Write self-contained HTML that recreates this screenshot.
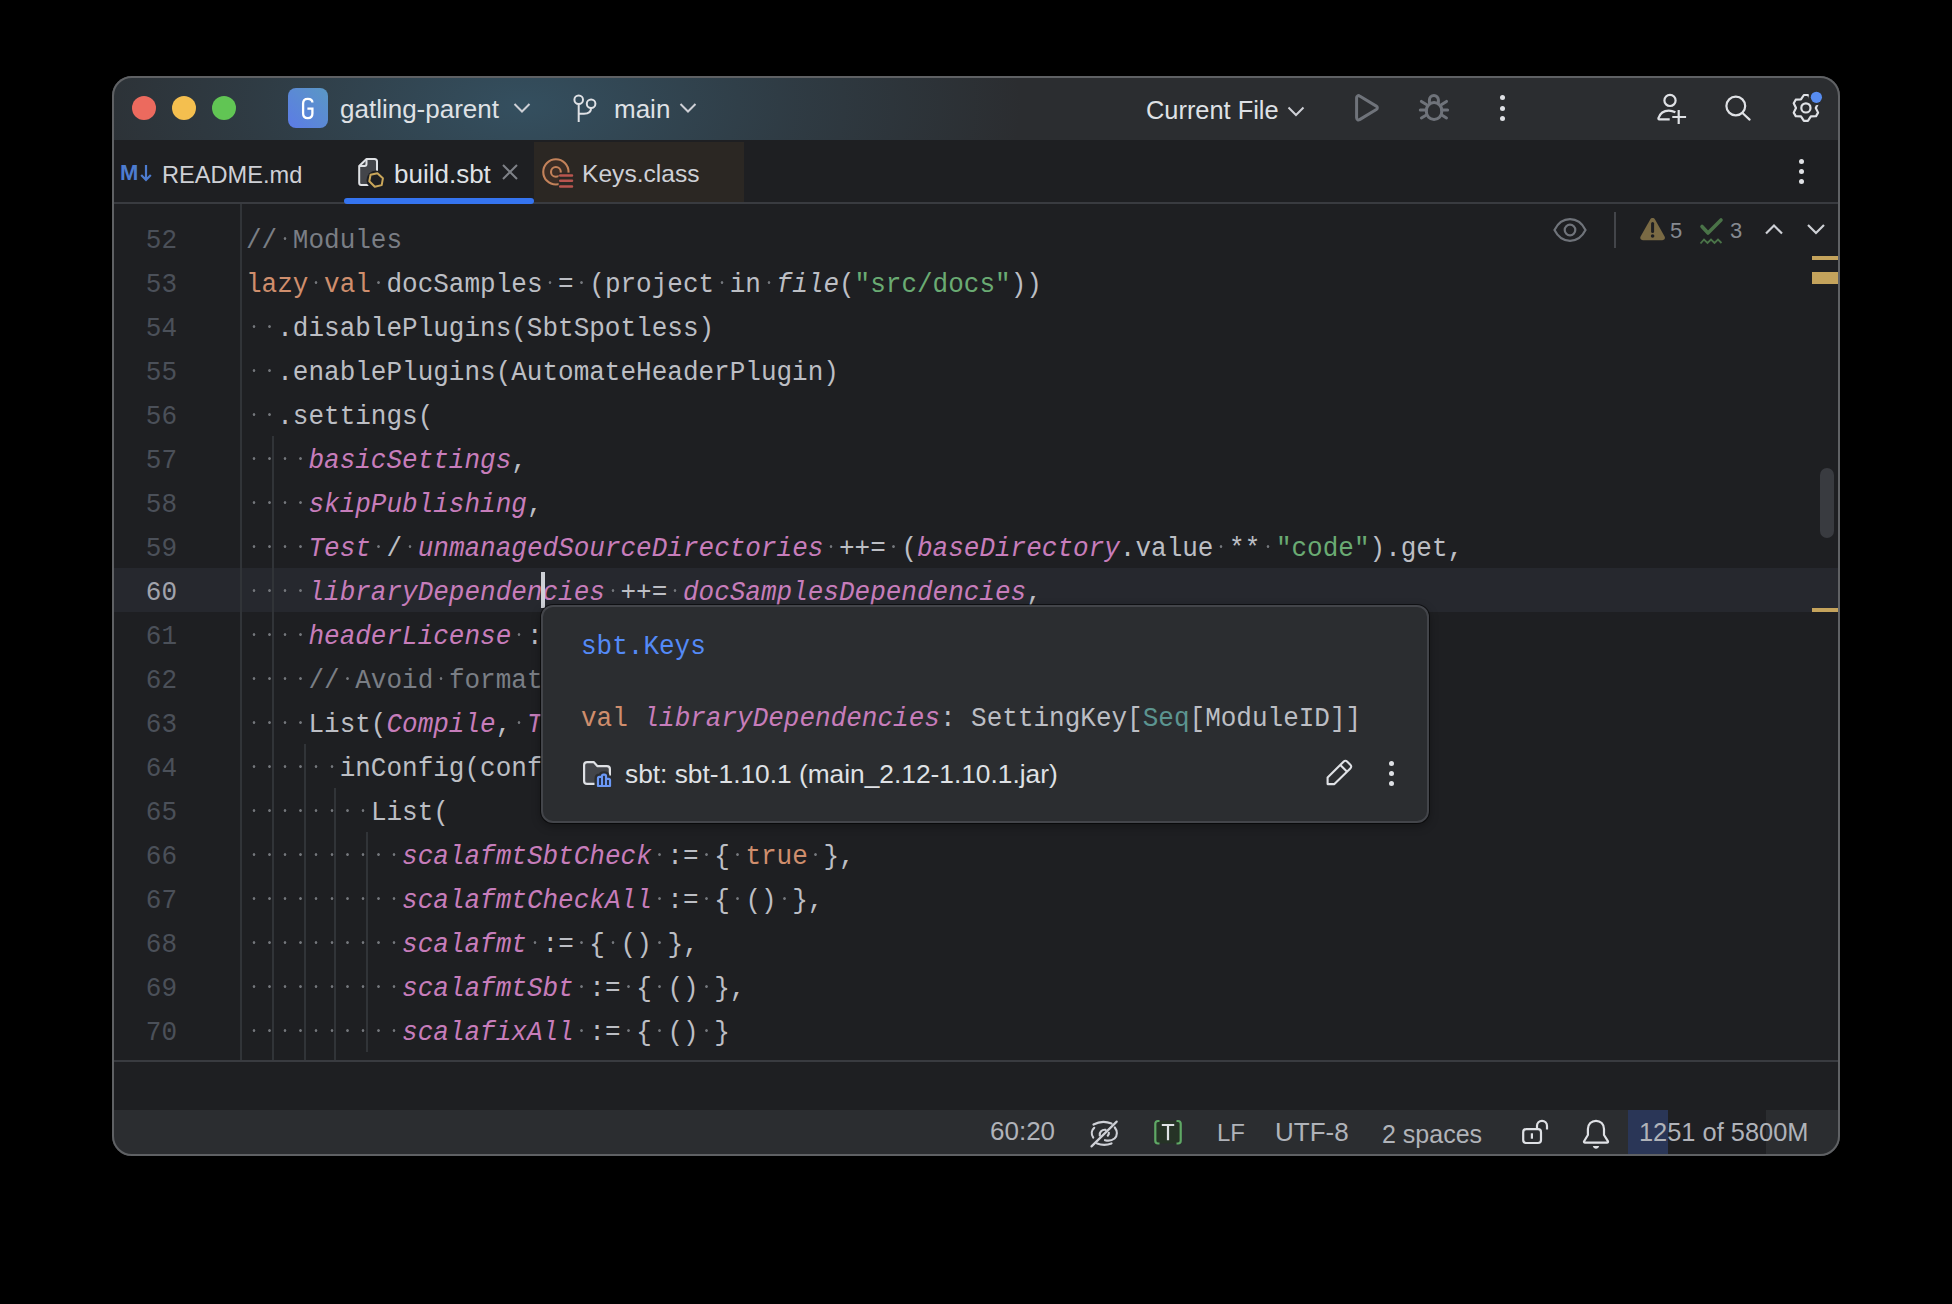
<!DOCTYPE html>
<html><head><meta charset="utf-8"><style>
*{box-sizing:border-box;margin:0;padding:0}
html,body{width:1952px;height:1304px;overflow:hidden;background:#000}
body{position:relative;font-family:"Liberation Sans",sans-serif}
#win{position:absolute;left:0;top:0;width:1952px;height:1304px;clip-path:inset(76px 112px 148px 112px round 20px);background:#1E1F22}
#win>div,#win>span,#win>svg{position:absolute}
#frame{position:absolute;left:112px;top:76px;width:1728px;height:1080px;border-radius:20px;border:2px solid #5f6164;pointer-events:none;z-index:50}
.ui{font-family:"Liberation Sans",sans-serif;font-size:26px;color:#DFE1E5;white-space:pre;line-height:30px}
.code{font-family:"Liberation Mono",monospace;font-size:26px;white-space:pre;line-height:44px;height:44px;color:#BCBEC4;left:246px;padding-top:3px;transform:scaleY(1.06);transform-origin:0 34px}
.k{color:#CF8E6D}.s{color:#6AAB73}.c{color:#7A7E85}.p{color:#C77DBB;font-style:italic}.i{font-style:italic}
.w{background:radial-gradient(circle at 50% 44%, #74777C 0, #74777C 0.9px, rgba(116,119,124,0) 1.7px)}
.ln{font-family:"Liberation Mono",monospace;font-size:26px;line-height:44px;padding-top:3px;transform:scaleY(1.05);transform-origin:0 34px;color:#4B5059;text-align:right;width:100px;left:77px}
.guide{width:2px;background:#313438}
</style></head>
<body>
<div id="win">

<div style="left:112px;top:76px;width:1728px;height:64px;background:radial-gradient(ellipse 500px 240px at 410px 30px, rgba(58,100,124,0.62), rgba(58,100,124,0.25) 55%, rgba(58,100,124,0) 100%), #2B2D30"></div>
<div style="left:132px;top:96px;width:24px;height:24px;border-radius:50%;background:#EC6A5E"></div>
<div style="left:172px;top:96px;width:24px;height:24px;border-radius:50%;background:#F4BF4F"></div>
<div style="left:212px;top:96px;width:24px;height:24px;border-radius:50%;background:#61C554"></div>
<div style="left:288px;top:88px;width:40px;height:40px;border-radius:8px;background:linear-gradient(45deg,#5C7BE6 0%,#5A98C4 100%)"></div>
<svg style="left:288px;top:88px" width="40" height="40" viewBox="0 0 40 40"><path d="M24.4 14.6 C24.4 12.2 22.6 10.9 19.8 10.9 C16.9 10.9 15.1 12.5 15.1 15.5 V25.6 C15.1 28.6 16.9 30.2 19.8 30.2 C22.7 30.2 24.4 28.6 24.4 25.6 V20.6 H19.4" fill="none" stroke="#fff" stroke-width="2.3"/></svg>
<div class="ui" style="left:340px;top:94px;">gatling-parent</div>
<svg style="left:512px;top:100px" width="20" height="16" viewBox="0 0 20 16"><path d="M2.5 4 L10 11.5 L17.5 4" fill="none" stroke="#CED0D6" stroke-width="2"/></svg>
<svg style="left:570px;top:92px" width="32" height="32" viewBox="0 0 32 32"><circle cx="8.7" cy="7.8" r="4.3" fill="none" stroke="#DFE1E5" stroke-width="2"/><circle cx="21.1" cy="11.7" r="4.3" fill="none" stroke="#DFE1E5" stroke-width="2"/><path d="M8.7 12.1 V30" fill="none" stroke="#DFE1E5" stroke-width="2"/><path d="M21.1 16 C21.1 20 19 21.8 14 21.8 H8.7" fill="none" stroke="#DFE1E5" stroke-width="2"/></svg>
<div class="ui" style="left:614px;top:94px;">main</div>
<svg style="left:678px;top:100px" width="20" height="16" viewBox="0 0 20 16"><path d="M2.5 4 L10 11.5 L17.5 4" fill="none" stroke="#CED0D6" stroke-width="2"/></svg>
<div class="ui" style="left:1146px;top:95px;font-size:25.4px">Current File</div>
<svg style="left:1286px;top:104px" width="20" height="16" viewBox="0 0 20 16"><path d="M2.5 3.5 L10 11 L17.5 3.5" fill="none" stroke="#CED0D6" stroke-width="2"/></svg>
<svg style="left:1350px;top:90px" width="36" height="36" viewBox="0 0 36 36"><path d="M6.6 7.8 C6.6 6.1 8.2 5.1 9.6 6 L26.3 16.1 C27.7 17 27.7 18.6 26.3 19.5 L9.6 29.6 C8.2 30.5 6.6 29.5 6.6 27.8 Z" fill="none" stroke="#6F737A" stroke-width="3" stroke-linejoin="round"/></svg>
<svg style="left:1416px;top:90px" width="36" height="36" viewBox="0 0 36 36"><g fill="none" stroke="#6F737A" stroke-width="3" stroke-linecap="round"><path d="M13.4 12.3 V10 A4.5 4.5 0 0 1 22.4 10 V12.3"/><rect x="10.4" y="12.6" width="15.3" height="16.9" rx="7.6"/><path d="M5.4 11.4 L10.4 14.5 M4.3 20 H10.4 M5.4 28 L10.4 25 M30.5 11.4 L25.7 14.5 M31.6 20 H25.7 M30.5 28 L25.7 25"/></g></svg>
<div style="left:1499.5px;top:95px;width:5px;height:5px;border-radius:50%;background:#DFE1E5"></div>
<div style="left:1499.5px;top:105.5px;width:5px;height:5px;border-radius:50%;background:#DFE1E5"></div>
<div style="left:1499.5px;top:116px;width:5px;height:5px;border-radius:50%;background:#DFE1E5"></div>
<svg style="left:1654px;top:90px" width="36" height="36" viewBox="0 0 36 36"><g fill="none" stroke="#DFE1E5" stroke-width="2.2"><circle cx="16" cy="10.4" r="5.6"/><path d="M15.7 29.3 H5.2 C4.5 29.3 4.2 28.8 4.5 28 C6 23.5 10 20.6 14.8 20.6 C17 20.6 19 21.1 21.4 22.3"/><path d="M18.3 27 H32.1 M24.7 20.1 V34"/></g></svg>
<svg style="left:1720px;top:90px" width="36" height="36" viewBox="0 0 36 36"><g fill="none" stroke="#DFE1E5" stroke-width="2.2"><circle cx="15.8" cy="16" r="9.4"/><path d="M22.5 23 L29.6 29.6" stroke-linecap="round"/></g></svg>
<svg style="left:1788px;top:90px" width="36" height="36" viewBox="0 0 36 36"><g fill="none" stroke="#DFE1E5" stroke-width="2.2" stroke-linejoin="round"><path d="M15.90 5.00 L19.90 5.00 L22.85 9.33 L28.07 9.72 L30.07 13.18 L27.80 17.90 L30.07 22.62 L28.07 26.08 L22.85 26.47 L19.90 30.80 L15.90 30.80 L12.95 26.47 L7.73 26.08 L5.73 22.62 L8.00 17.90 L5.73 13.18 L7.73 9.72 L12.95 9.33 Z"/><circle cx="17.9" cy="17.9" r="4.6"/></g><circle cx="28.4" cy="7.3" r="8" fill="#2B2D30"/><circle cx="28.4" cy="7.3" r="5.6" fill="#578CF0"/></svg>


<div style="left:112px;top:140px;width:1728px;height:64px;background:#1E1F22"></div>
<div style="left:534px;top:142px;width:210px;height:60px;background:#2B2723"></div>
<div style="left:112px;top:202px;width:1728px;height:2px;background:#393B40"></div>
<div style="left:344px;top:198px;width:190px;height:6px;border-radius:3px;background:#3574F0"></div>
<div class="ui" style="left:120px;top:158px;color:#4D7CD0;font-weight:bold;font-size:22px;">M</div>
<svg style="left:139px;top:162px" width="16" height="22" viewBox="0 0 16 22"><path d="M7 3 V18 M2.2 13 L7 18 L11.8 13" fill="none" stroke="#4D7CD0" stroke-width="2.2"/></svg>
<div class="ui" style="left:162px;top:160px;color:#CED0D6;font-size:23.6px;">README.md</div>
<svg style="left:354px;top:154px" width="36" height="36" viewBox="0 0 36 36"><path d="M5.2 12 L12.5 5 H20.5 Q23 5 23 7.5 V29 Q23 31 21 31 H7.2 Q5.2 31 5.2 29 Z" fill="#43454A" stroke="#DFE1E5" stroke-width="2" stroke-linejoin="round"/><path d="M12.5 5 V10 Q12.5 12 10.5 12 H5.2" fill="none" stroke="#DFE1E5" stroke-width="2" stroke-linejoin="round"/><circle cx="22.1" cy="26" r="9.6" fill="#1E1F22"/><path d="M23.4 19.2 L28.9 24.3 L27.7 31.1 L20.8 32.7 L15.3 27.2 L16.6 20.8 Z" fill="none" stroke="#C9A65A" stroke-width="2" stroke-linejoin="round"/></svg>
<div class="ui" style="left:394px;top:159px;color:#DFE1E5;">build.sbt</div>
<svg style="left:500px;top:162px" width="20" height="20" viewBox="0 0 20 20"><path d="M3 3 L17 17 M17 3 L3 17" stroke="#7E8187" stroke-width="2"/></svg>
<svg style="left:540px;top:154px" width="36" height="36" viewBox="0 0 36 36"><circle cx="15.9" cy="17.9" r="12.65" fill="#3B2D25" stroke="#C3825A" stroke-width="2.1"/><circle cx="15.9" cy="17.9" r="4.9" fill="none" stroke="#C3825A" stroke-width="2.1"/><rect x="18.6" y="18.6" width="16" height="17" fill="#2B2723"/><path d="M20.2 21.5 H32 M20.2 26.7 H32 M20.2 32.6 H32" stroke="#B9554F" stroke-width="2.5" stroke-linecap="round"/></svg>
<div class="ui" style="left:582px;top:159px;color:#CED0D6;font-size:24.6px;">Keys.class</div>
<div style="left:1799px;top:159px;width:5px;height:5px;border-radius:50%;background:#DFE1E5"></div>
<div style="left:1799px;top:169px;width:5px;height:5px;border-radius:50%;background:#DFE1E5"></div>
<div style="left:1799px;top:179px;width:5px;height:5px;border-radius:50%;background:#DFE1E5"></div>

<div style="left:112px;top:568px;width:1728px;height:44px;background:#26282E"></div>
<div style="left:240px;top:204px;width:2px;height:856px;background:#313438"></div>
<div class="guide" style="left:272px;top:436px;height:624px"></div>
<div class="guide" style="left:304px;top:744px;height:316px"></div>
<div class="guide" style="left:334px;top:788px;height:272px"></div>
<div class="guide" style="left:366px;top:832px;height:220px"></div>
<div class="ln" style="top:216px;">52</div>
<div class="code" style="top:216px"><span class="c">//</span><span class="w"> </span><span class="c">Modules</span></div>
<div class="ln" style="top:260px;">53</div>
<div class="code" style="top:260px"><span class="k">lazy</span><span class="w"> </span><span class="k">val</span><span class="w"> </span>docSamples<span class="w"> </span>=<span class="w"> </span>(project<span class="w"> </span>in<span class="w"> </span><span class="i">file</span>(<span class="s">&quot;src/docs&quot;</span>))</div>
<div class="ln" style="top:304px;">54</div>
<div class="code" style="top:304px"><span class="w"> </span><span class="w"> </span>.disablePlugins(SbtSpotless)</div>
<div class="ln" style="top:348px;">55</div>
<div class="code" style="top:348px"><span class="w"> </span><span class="w"> </span>.enablePlugins(AutomateHeaderPlugin)</div>
<div class="ln" style="top:392px;">56</div>
<div class="code" style="top:392px"><span class="w"> </span><span class="w"> </span>.settings(</div>
<div class="ln" style="top:436px;">57</div>
<div class="code" style="top:436px"><span class="w"> </span><span class="w"> </span><span class="w"> </span><span class="w"> </span><span class="p">basicSettings</span>,</div>
<div class="ln" style="top:480px;">58</div>
<div class="code" style="top:480px"><span class="w"> </span><span class="w"> </span><span class="w"> </span><span class="w"> </span><span class="p">skipPublishing</span>,</div>
<div class="ln" style="top:524px;">59</div>
<div class="code" style="top:524px"><span class="w"> </span><span class="w"> </span><span class="w"> </span><span class="w"> </span><span class="p">Test</span><span class="w"> </span>/<span class="w"> </span><span class="p">unmanagedSourceDirectories</span><span class="w"> </span>++=<span class="w"> </span>(<span class="p">baseDirectory</span>.value<span class="w"> </span>**<span class="w"> </span><span class="s">&quot;code&quot;</span>).get,</div>
<div class="ln" style="top:568px;color:#A1A3AB;">60</div>
<div class="code" style="top:568px"><span class="w"> </span><span class="w"> </span><span class="w"> </span><span class="w"> </span><span class="p">libraryDependencies</span><span class="w"> </span>++=<span class="w"> </span><span class="p">docSamplesDependencies</span>,</div>
<div class="ln" style="top:612px;">61</div>
<div class="code" style="top:612px"><span class="w"> </span><span class="w"> </span><span class="w"> </span><span class="w"> </span><span class="p">headerLicense</span><span class="w"> </span>:=<span class="w"> </span>None,</div>
<div class="ln" style="top:656px;">62</div>
<div class="code" style="top:656px"><span class="w"> </span><span class="w"> </span><span class="w"> </span><span class="w"> </span><span class="c">//</span><span class="w"> </span><span class="c">Avoid</span><span class="w"> </span><span class="c">formatting</span></div>
<div class="ln" style="top:700px;">63</div>
<div class="code" style="top:700px"><span class="w"> </span><span class="w"> </span><span class="w"> </span><span class="w"> </span>List(<span class="p">Compile</span>,<span class="w"> </span><span class="p">Test</span>).flatMap<span class="w"> </span>{<span class="w"> </span>config<span class="w"> </span>=&gt;</div>
<div class="ln" style="top:744px;">64</div>
<div class="code" style="top:744px"><span class="w"> </span><span class="w"> </span><span class="w"> </span><span class="w"> </span><span class="w"> </span><span class="w"> </span>inConfig(config)(</div>
<div class="ln" style="top:788px;">65</div>
<div class="code" style="top:788px"><span class="w"> </span><span class="w"> </span><span class="w"> </span><span class="w"> </span><span class="w"> </span><span class="w"> </span><span class="w"> </span><span class="w"> </span>List(</div>
<div class="ln" style="top:832px;">66</div>
<div class="code" style="top:832px"><span class="w"> </span><span class="w"> </span><span class="w"> </span><span class="w"> </span><span class="w"> </span><span class="w"> </span><span class="w"> </span><span class="w"> </span><span class="w"> </span><span class="w"> </span><span class="p">scalafmtSbtCheck</span><span class="w"> </span>:=<span class="w"> </span>{<span class="w"> </span><span class="k">true</span><span class="w"> </span>},</div>
<div class="ln" style="top:876px;">67</div>
<div class="code" style="top:876px"><span class="w"> </span><span class="w"> </span><span class="w"> </span><span class="w"> </span><span class="w"> </span><span class="w"> </span><span class="w"> </span><span class="w"> </span><span class="w"> </span><span class="w"> </span><span class="p">scalafmtCheckAll</span><span class="w"> </span>:=<span class="w"> </span>{<span class="w"> </span>()<span class="w"> </span>},</div>
<div class="ln" style="top:920px;">68</div>
<div class="code" style="top:920px"><span class="w"> </span><span class="w"> </span><span class="w"> </span><span class="w"> </span><span class="w"> </span><span class="w"> </span><span class="w"> </span><span class="w"> </span><span class="w"> </span><span class="w"> </span><span class="p">scalafmt</span><span class="w"> </span>:=<span class="w"> </span>{<span class="w"> </span>()<span class="w"> </span>},</div>
<div class="ln" style="top:964px;">69</div>
<div class="code" style="top:964px"><span class="w"> </span><span class="w"> </span><span class="w"> </span><span class="w"> </span><span class="w"> </span><span class="w"> </span><span class="w"> </span><span class="w"> </span><span class="w"> </span><span class="w"> </span><span class="p">scalafmtSbt</span><span class="w"> </span>:=<span class="w"> </span>{<span class="w"> </span>()<span class="w"> </span>},</div>
<div class="ln" style="top:1008px;">70</div>
<div class="code" style="top:1008px"><span class="w"> </span><span class="w"> </span><span class="w"> </span><span class="w"> </span><span class="w"> </span><span class="w"> </span><span class="w"> </span><span class="w"> </span><span class="w"> </span><span class="w"> </span><span class="p">scalafixAll</span><span class="w"> </span>:=<span class="w"> </span>{<span class="w"> </span>()<span class="w"> </span>}</div>
<div style="left:541px;top:572px;width:4px;height:36px;background:#CED0D6"></div>
<div style="left:112px;top:1060px;width:1728px;height:2px;background:#393B40"></div>

<svg style="left:1550px;top:212px" width="40" height="36" viewBox="0 0 40 36"><g fill="none" stroke="#6F737A" stroke-width="2.2"><path d="M4.5 18 C8 11 13.5 7.2 20 7.2 C26.5 7.2 32 11 35.5 18 C32 25 26.5 28.8 20 28.8 C13.5 28.8 8 25 4.5 18 Z"/><circle cx="20" cy="18" r="5.3"/></g></svg>
<div style="left:1614px;top:212px;width:2px;height:36px;background:#43454A"></div>
<svg style="left:1638px;top:214px" width="30" height="30" viewBox="0 0 30 30"><path d="M12.2 5.5 C13.3 3.6 15.9 3.6 17 5.5 L26.6 22.5 C27.6 24.3 26.3 26.2 24.3 26.2 H4.9 C2.9 26.2 1.6 24.3 2.6 22.5 Z" fill="#7A6A44"/><path d="M14.6 9.5 V17.5" stroke="#1E1F22" stroke-width="3" stroke-linecap="round"/><circle cx="14.6" cy="22" r="1.8" fill="#1E1F22"/></svg>
<div class="ui" style="left:1670px;top:216px;color:#868A91;font-size:22px;">5</div>
<svg style="left:1696px;top:214px" width="32" height="34" viewBox="0 0 32 34"><path d="M6 12.5 L12 19 L25 6" fill="none" stroke="#4A7348" stroke-width="3.6" stroke-linecap="round" stroke-linejoin="round"/><path d="M4.5 29.5 L8 25.5 L11.5 29 L15 25.5 L18.5 29 L22 25.5 L25.5 29" fill="none" stroke="#4A7348" stroke-width="1.8"/></svg>
<div class="ui" style="left:1730px;top:216px;color:#868A91;font-size:22px;">3</div>
<svg style="left:1762px;top:220px" width="24" height="18" viewBox="0 0 24 18"><path d="M4 13.5 L12 5.5 L20 13.5" fill="none" stroke="#CED0D6" stroke-width="2.2"/></svg>
<svg style="left:1804px;top:220px" width="24" height="18" viewBox="0 0 24 18"><path d="M4 5 L12 13 L20 5" fill="none" stroke="#CED0D6" stroke-width="2.2"/></svg>
<div style="left:1812px;top:256px;width:28px;height:4px;background:#C4A35C"></div>
<div style="left:1812px;top:272px;width:28px;height:12px;background:#C4A35C"></div>
<div style="left:1812px;top:608px;width:28px;height:4px;background:#C4A35C"></div>
<div style="left:1820px;top:468px;width:14px;height:70px;border-radius:7px;background:#393B40"></div>


<div style="left:541px;top:605px;width:888px;height:218px;border-radius:12px;background:#2B2D30;border:2px solid #43454A;box-shadow:0 0 0 1px rgba(0,0,0,0.55), 0 3px 10px rgba(0,0,0,0.35)"></div>
<div class="code" style="left:581px;top:622px;color:#548AF7">sbt.Keys</div>
<div class="code" style="left:581px;top:694px"><span class="k">val</span> <span class="p">libraryDependencies</span>: SettingKey[<span style="color:#5C9590">Seq</span>[ModuleID]]</div>
<svg style="left:580px;top:758px" width="36" height="32" viewBox="0 0 36 32"><path d="M4.1 7.1 Q4.1 4.1 7.1 4.1 H13.7 L17.3 8.1 H26.9 Q29.9 8.1 29.9 11.1 V22.9 Q29.9 25.9 26.9 25.9 H7.1 Q4.1 25.9 4.1 22.9 Z" fill="#43454A" stroke="#DFE1E5" stroke-width="2.2" stroke-linejoin="round"/><path d="M18 28 V20.4 Q18 18.9 19.5 18.9 H22 V18.2 Q22 16.7 23.5 16.7 H24.5 Q26 16.7 26 18.2 V20.8 H28.5 Q30 20.8 30 22.3 V28 Z" fill="#2B2D30" stroke="#2B2D30" stroke-width="7" stroke-linejoin="round"/><path d="M18 28 V20.4 Q18 18.9 19.5 18.9 H22 V18.2 Q22 16.7 23.5 16.7 H24.5 Q26 16.7 26 18.2 V20.8 H28.5 Q30 20.8 30 22.3 V28 Z M22 18.9 V28 M26 20.8 V28" fill="#1F2535" stroke="#6B98F5" stroke-width="2.2" stroke-linejoin="round"/></svg>
<div class="ui" style="left:625px;top:759px;color:#DFE1E5;font-size:26.3px">sbt: sbt-1.10.1 (main_2.12-1.10.1.jar)</div>
<svg style="left:1322px;top:756px" width="34" height="34" viewBox="0 0 34 34"><path d="M5.6 28.1 V21.6 L21.5 5.7 Q23.4 3.8 25.3 5.7 L28.3 8.7 Q30.2 10.6 28.3 12.5 L12.4 28.1 Z M18.3 8.9 L25.1 15.7" fill="none" stroke="#DFE1E5" stroke-width="2.1" stroke-linejoin="round"/></svg>
<div style="left:1388.5px;top:760.5px;width:5px;height:5px;border-radius:50%;background:#DFE1E5"></div>
<div style="left:1388.5px;top:770.5px;width:5px;height:5px;border-radius:50%;background:#DFE1E5"></div>
<div style="left:1388.5px;top:780.5px;width:5px;height:5px;border-radius:50%;background:#DFE1E5"></div>


<div style="left:112px;top:1110px;width:1728px;height:46px;background:#2B2D30"></div>
<div class="ui" style="left:990px;top:1116px;color:#B0B3B9;">60:20</div>
<svg style="left:1086px;top:1114px" width="36" height="36" viewBox="0 0 36 36"><g fill="none" stroke="#CED0D6" stroke-width="2.2" stroke-linecap="round"><path d="M7.5 10.5 C13 7.5 20 7.3 25.5 9.5"/><path d="M28.8 13.5 C31.5 17 31.5 21.5 28.5 24.5 C26 26.5 22.5 27.2 19 26.2"/><path d="M11 29.5 C15.5 31.2 21 31.2 25.5 29.5"/><path d="M7.2 23.5 C5 20 5.5 16 8.2 13.8"/><path d="M13.8 21.5 C13.2 18 15.8 15.5 19.5 15.8"/><path d="M21.8 21.6 C22.6 20.8 23 19.8 22.8 18.8"/><path d="M5.5 32.4 L30.7 7.6"/></g></svg>
<svg style="left:1150px;top:1114px" width="36" height="36" viewBox="0 0 36 36"><rect x="5.5" y="7" width="25" height="22.5" rx="3" fill="#263326"/><path d="M9.5 7 H8 Q5.3 7 5.3 9.7 V26.8 Q5.3 29.5 8 29.5 H9.5 M26.5 7 H28 Q30.7 7 30.7 9.7 V26.8 Q30.7 29.5 28 29.5 H26.5" fill="none" stroke="#5FA865" stroke-width="2.2"/><path d="M11.8 11 H24.2 M18 11 V26.3" fill="none" stroke="#DFE1E5" stroke-width="2.2"/></svg>
<div class="ui" style="left:1217px;top:1118px;color:#B0B3B9;font-size:24px">LF</div>
<div class="ui" style="left:1275px;top:1117px;color:#B0B3B9;">UTF-8</div>
<div class="ui" style="left:1382px;top:1119px;color:#B0B3B9;font-size:25px;">2 spaces</div>
<svg style="left:1518px;top:1114px" width="36" height="36" viewBox="0 0 36 36"><g fill="none" stroke="#DFE1E5" stroke-width="2.2"><rect x="5.2" y="15.2" width="17.8" height="13.8" rx="3"/><path d="M19 15.2 V11.8 A5 5 0 0 1 29 11.8 V15.6"/><path d="M13.9 19.3 V24.7"/></g></svg>
<svg style="left:1578px;top:1112px" width="36" height="40" viewBox="0 0 36 40"><path d="M9.9 23 V17 C9.9 12 13.5 8.8 18 8.8 C22.5 8.8 26 12 26 17 V23 L29.9 29.2 C30.3 30 29.9 30.6 29 30.6 H7 C6.1 30.6 5.7 30 6.1 29.2 Z" fill="none" stroke="#DFE1E5" stroke-width="2.2" stroke-linejoin="round"/><path d="M14.8 34 H21.2 C20.6 35.8 19.5 36.8 18 36.8 C16.5 36.8 15.4 35.8 14.8 34 Z" fill="#DFE1E5"/></svg>
<div style="left:1628px;top:1110px;width:40px;height:45px;background:#2A3657"></div>
<div style="left:1668px;top:1110px;width:98px;height:45px;background:#1F2023"></div>
<div class="ui" style="left:1639px;top:1117px;color:#B0B3B9;font-size:25.4px;">1251 of 5800M</div>

</div>
<div id="frame"></div>
</body></html>
